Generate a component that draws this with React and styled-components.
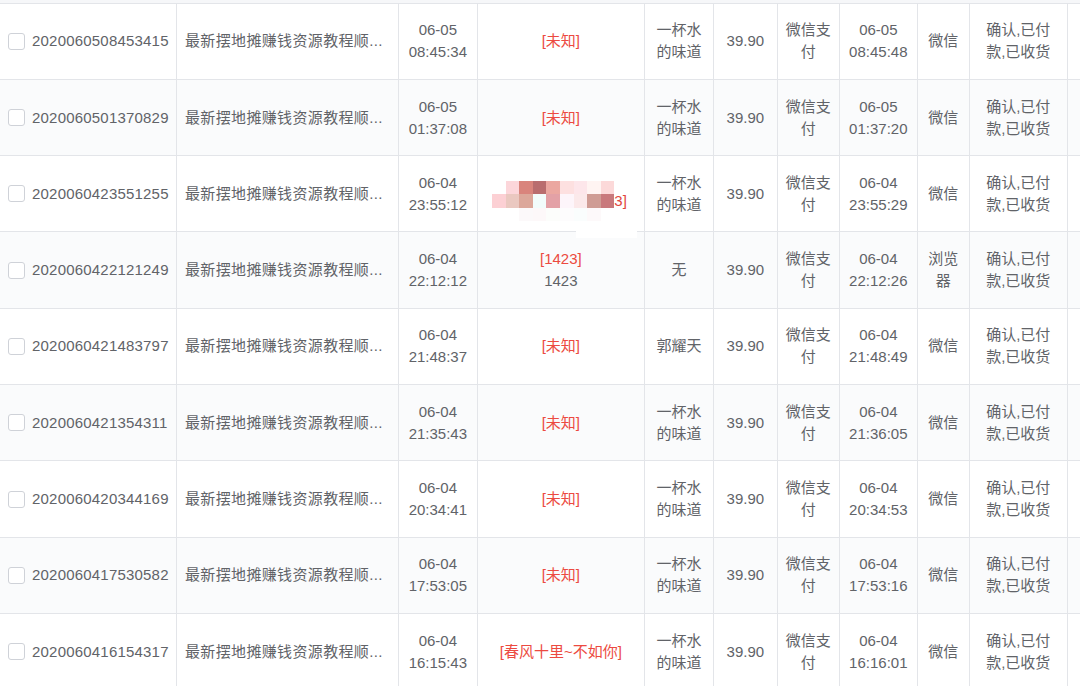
import React from "react";
import styled, { createGlobalStyle } from "styled-components";

const GlobalStyle = createGlobalStyle`
  html, body {
    margin: 0;
    padding: 0;
    background: #fff;
  }
  body {
    width: 1080px;
    height: 686px;
    overflow: hidden;
    font-family: "Liberation Sans", "Noto Sans CJK SC", sans-serif;
  }
`;

const COLS = "176px 222px 78.7px 167.3px 69px 63.7px 62.3px 77.7px 52.3px 97.7px 60px";

const Table = styled.div`
  width: 1080px;
  overflow: hidden;
  color: #616368;
  font-size: 15px;
  line-height: 22px;
`;

const TopEdge = styled.div`
  height: 2.6px;
  background: #f6f7f9;
  border-bottom: 1px solid #e3e5e9;
`;

const Row = styled.div`
  display: grid;
  grid-template-columns: ${COLS};
  height: 76.3px;
  box-sizing: border-box;
  border-bottom: 1px solid #e3e5e9;
  background: ${(p) => (p.$striped ? "#fafbfc" : "#fff")};
`;

const Cell = styled.div`
  position: relative;
  display: flex;
  flex-direction: column;
  justify-content: center;
  align-items: ${(p) => (p.$left ? "flex-start" : "center")};
  text-align: ${(p) => (p.$left ? "left" : "center")};
  padding: 0 ${(p) => p.$pad ?? 10}px;
  border-left: ${(p) => (p.$first ? "none" : "1px solid #e3e5e9")};
  min-width: 0;
`;

const IdCell = styled(Cell)`
  flex-direction: row;
  align-items: center;
  justify-content: flex-start;
  gap: 7px;
  padding-left: 8px;
  letter-spacing: 0.2px;
`;

const Check = styled.span`
  width: 17px;
  height: 17px;
  box-sizing: border-box;
  border: 1px solid #cfd2d8;
  border-radius: 3px;
  background: #fff;
  flex: none;
`;

const Title = styled.div`
  width: 100%;
  white-space: nowrap;
  overflow: hidden;
  text-overflow: ellipsis;
  letter-spacing: 0.35px;
`;

const Red = styled.div`
  color: #ec4a41;
`;

const Mosaic = styled.div`
  position: absolute;
  left: 13.3px;
  top: 9.4px;
  width: 146px;
  height: 60px;
  padding: 15px 0 0 1px;
  box-sizing: border-box;
  background: #fff;
  display: grid;
  grid-template-columns: repeat(10, 13.6px);
  grid-auto-rows: 13.6px;
  z-index: 2;
  &::after {
    content: "";
    position: absolute;
    left: 85px;
    top: 60px;
    width: 61px;
    height: 12px;
    background: #fff;
  }
`;

const Block = styled.span`
  background: ${(p) => p.$c};
  color: #e2463e;
  font-size: 15px;
  line-height: 13.6px;
  overflow: visible;
  white-space: nowrap;
  text-align: left;
`;

const mosaicRows = [
  ["transparent", "#fcd6da", "#d9847c", "#b96d6e", "#eba7a0", "#fde0e0", "#fde6ea", "#fff4f2", "#fcd9d9", "transparent"],
  ["#fcd0d4", "#eac8c0", "#dca79a", "#f2fcfb", "#e3a1a6", "#fdf5fa", "#fbe9ea", "#cf9c94", "#c9797c", "transparent"],
  ["transparent", "transparent", "#fcf9fa", "#fdf8f9", "#fcfdfb", "#fdfcfd", "#fafdfd", "#fdf9fa", "transparent", "transparent"],
];

const Pixelated = () => (
  <Mosaic>
    {mosaicRows.map((r, i) =>
      r.map((c, j) => (
        <Block key={`${i}-${j}`} $c={c}>
          {i === 1 && j === 9 ? "3]" : ""}
        </Block>
      ))
    )}
  </Mosaic>
);

const rows = [
  { id: "2020060508453415", t: ["06-05", "08:45:34"], buyer: "[未知]", name: "一杯水的味道", pt: ["06-05", "08:45:48"], src: "微信" },
  { id: "2020060501370829", t: ["06-05", "01:37:08"], buyer: "[未知]", name: "一杯水的味道", pt: ["06-05", "01:37:20"], src: "微信" },
  { id: "2020060423551255", t: ["06-04", "23:55:12"], hidden: true, name: "一杯水的味道", pt: ["06-04", "23:55:29"], src: "微信" },
  { id: "2020060422121249", t: ["06-04", "22:12:12"], buyer: "[1423]", sub: "1423", name: "无", pt: ["06-04", "22:12:26"], src: "浏览器" },
  { id: "2020060421483797", t: ["06-04", "21:48:37"], buyer: "[未知]", name: "郭耀天", pt: ["06-04", "21:48:49"], src: "微信" },
  { id: "2020060421354311", t: ["06-04", "21:35:43"], buyer: "[未知]", name: "一杯水的味道", pt: ["06-04", "21:36:05"], src: "微信" },
  { id: "2020060420344169", t: ["06-04", "20:34:41"], buyer: "[未知]", name: "一杯水的味道", pt: ["06-04", "20:34:53"], src: "微信" },
  { id: "2020060417530582", t: ["06-04", "17:53:05"], buyer: "[未知]", name: "一杯水的味道", pt: ["06-04", "17:53:16"], src: "微信" },
  { id: "2020060416154317", t: ["06-04", "16:15:43"], buyer: "[春风十里~不如你]", name: "一杯水的味道", pt: ["06-04", "16:16:01"], src: "微信" },
];

const App = () => (
  <Table>
    <GlobalStyle />
    <TopEdge />
    {rows.map((r, i) => (
      <Row key={r.id} $striped={i % 2 === 1}>
        <IdCell $first>
          <Check />
          <span>{r.id}</span>
        </IdCell>
        <Cell $left $pad={8}>
          <Title>最新摆地摊赚钱资源教程顺...</Title>
        </Cell>
        <Cell $pad={8}>
          <div>{r.t[0]}</div>
          <div>{r.t[1]}</div>
        </Cell>
        <Cell>
          {r.hidden ? <Pixelated /> : <Red>{r.buyer}</Red>}
          {r.sub && <div>{r.sub}</div>}
        </Cell>
        <Cell $pad={10}>{r.name}</Cell>
        <Cell $pad={6}>39.90</Cell>
        <Cell $pad={8}>微信支付</Cell>
        <Cell $pad={8}>
          <div>{r.pt[0]}</div>
          <div>{r.pt[1]}</div>
        </Cell>
        <Cell $pad={8}>{r.src}</Cell>
        <Cell $pad={12}>确认,已付款,已收货</Cell>
        <Cell />
      </Row>
    ))}
  </Table>
);

export default App;
